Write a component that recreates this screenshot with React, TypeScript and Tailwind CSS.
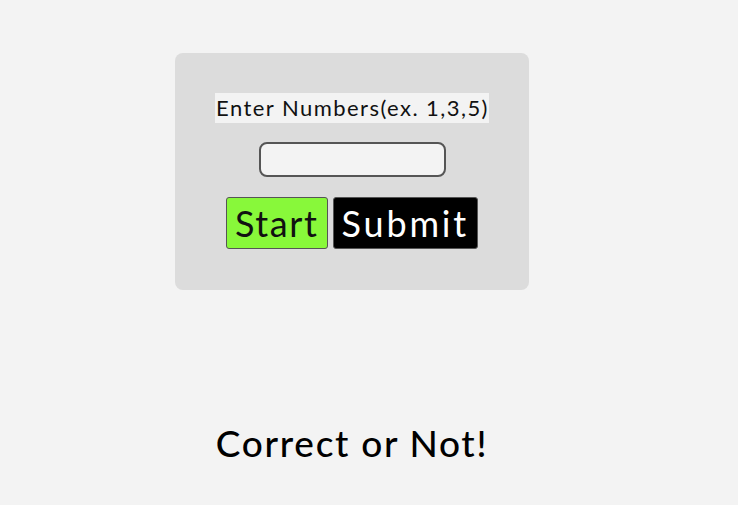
export default function App() {
  return (
    <div className="min-h-screen bg-[#f3f3f3] font-['Lato',sans-serif] text-black">
      <div className="w-[704px] flex flex-col items-center pt-[53px]">
        {/* Card */}
        <div className="w-[354px] h-[237px] bg-[#dcdcdc] rounded-[8px] flex flex-col items-center pt-[40px]">
          <label className="bg-[#f3f3f3] text-[22px] leading-[30px] tracking-[1.45px] pl-[1px] text-[#111]">
            Enter Numbers(ex. 1,3,5)
          </label>
          <input
            type="text"
            className="mt-[19px] w-[187px] h-[35px] bg-[#f3f3f3] border-2 border-[#555] rounded-[8px] outline-none px-2"
          />
          <div className="mt-[20px] flex gap-[5px]">
            <button className="h-[52px] px-[8px] bg-[#88f83a] border border-[#555] rounded-[3px] text-[36px] leading-none tracking-[1.6px] text-[#111]">
              Start
            </button>
            <button className="h-[52px] px-[8px] bg-black border border-[#555] rounded-[3px] text-[36px] leading-none tracking-[2.8px] text-white">
              Submit
            </button>
          </div>
        </div>
        <h1 className="mt-[131px] text-[37px] leading-[44px] font-medium tracking-[1.7px]">
          Correct or Not!
        </h1>
      </div>
    </div>
  );
}
